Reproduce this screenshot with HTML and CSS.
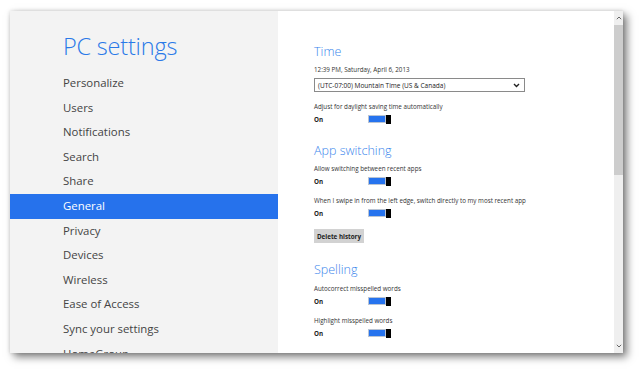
FILE: index.html
```html
<!DOCTYPE html>
<html>
<head>
<meta charset="utf-8">
<link rel="stylesheet" href="styles.css">
</head>
<body>
<div class="window">
  <aside class="sidebar">
    <h1 class="title">PC settings</h1>
    <ul class="nav">
      <li>Personalize</li>
      <li>Users</li>
      <li>Notifications</li>
      <li>Search</li>
      <li>Share</li>
      <li class="active">General</li>
      <li>Privacy</li>
      <li>Devices</li>
      <li>Wireless</li>
      <li>Ease of Access</li>
      <li>Sync your settings</li>
      <li>HomeGroup</li>
    </ul>
  </aside>
  <main class="content">
    <h2 class="heading first">Time</h2>
    <div class="text date">12:39 PM, Saturday, April 6, 2013</div>
    <div class="select">
      <span>(UTC-07:00) Mountain Time (US &amp; Canada)</span>
      <svg class="chev" width="7" height="5" viewBox="0 0 7 5"><polyline points="1,1 3.5,3.5 6,1" fill="none" stroke="#222" stroke-width="1.4"/></svg>
    </div>
    <div class="text desc">Adjust for daylight saving time automatically</div>
    <div class="onrow"><span class="on">On</span><span class="toggle"><span class="track"></span><span class="thumb"></span></span></div>

    <h2 class="heading">App switching</h2>
    <div class="text desc tight">Allow switching between recent apps</div>
    <div class="onrow"><span class="on">On</span><span class="toggle"><span class="track"></span><span class="thumb"></span></span></div>
    <div class="text desc">When I swipe in from the left edge, switch directly to my most recent app</div>
    <div class="onrow"><span class="on">On</span><span class="toggle"><span class="track"></span><span class="thumb"></span></span></div>
    <div class="button">Delete history</div>

    <h2 class="heading">Spelling</h2>
    <div class="text desc tight2">Autocorrect misspelled words</div>
    <div class="onrow"><span class="on">On</span><span class="toggle"><span class="track"></span><span class="thumb"></span></span></div>
    <div class="text desc">Highlight misspelled words</div>
    <div class="onrow"><span class="on">On</span><span class="toggle"><span class="track"></span><span class="thumb"></span></span></div>
  </main>
  <div class="scrollbar">
    <div class="arrow up"><svg width="6" height="4" viewBox="0 0 6 4"><polyline points="0.8,3.2 3,1 5.2,3.2" fill="none" stroke="#666" stroke-width="1"/></svg></div>
    <div class="thumbbar"></div>
    <div class="track-rest"></div>
    <div class="arrow down"><svg width="6" height="4" viewBox="0 0 6 4"><polyline points="0.8,0.8 3,3 5.2,0.8" fill="none" stroke="#666" stroke-width="1"/></svg></div>
  </div>
</div>
</body>
</html>
```

FILE: styles.css
```css
html, body {
  margin: 0;
  padding: 0;
  background: #ffffff;
}
body {
  width: 640px;
  height: 372px;
  overflow: hidden;
  font-family: "Open Sans", "Noto Sans", "Liberation Sans", sans-serif;
}
.window {
  margin: 11px 0 0 10px;
  width: 613px;
  height: 342px;
  display: flex;
  overflow: hidden;
  background: #fff;
  box-shadow: 4px 4px 8px rgba(0,0,0,0.5), 0 0 4px rgba(0,0,0,0.15);
}
.sidebar {
  width: 268px;
  flex: none;
  background: #f3f3f3;
  padding-top: 20px;
  box-sizing: border-box;
  overflow: hidden;
}
.title {
  margin: 0 0 10px 53px;
  font-size: 23.5px;
  line-height: 30px;
  font-weight: 300;
  color: #2a79e8;
  letter-spacing: -0.2px;
}
.nav {
  list-style: none;
  margin: 0;
  padding: 0;
}
.nav li {
  height: 24.6px;
  line-height: 24.6px;
  padding-left: 53px;
  font-size: 11.4px;
  color: #444;
}
.nav li.active {
  background: #2672ec;
  color: #fff;
}
.content {
  width: 336px;
  flex: none;
  box-sizing: border-box;
  padding: 31px 0 0 36px;
  overflow: hidden;
}
.heading {
  margin: 17px 0 0 0;
  padding-top: 1px;
  font-size: 12.5px;
  line-height: 18px;
  font-weight: 300;
  color: #3a86ec;
}
.heading.first {
  margin-top: 0;
}
.text {
  font-size: 6.25px;
  line-height: 10px;
  color: #333;
  white-space: nowrap;
}
.date {
  margin-top: 4px;
}
.select {
  margin-top: 3px;
  width: 211px;
  height: 14px;
  box-sizing: border-box;
  border: 1px solid #8a8a8a;
  display: flex;
  align-items: center;
  justify-content: space-between;
  padding: 0 4px 0 3px;
  font-size: 6.5px;
  color: #222;
}
.chev {
  display: block;
}
.desc {
  margin-top: 10px;
}
.desc.tight {
  margin-top: 4px;
}
.desc.tight2 {
  margin-top: 5px;
}
.onrow {
  margin-top: 2px;
  height: 10px;
  display: flex;
  align-items: center;
}
.on {
  width: 54px;
  font-size: 6.25px;
  font-weight: 700;
  color: #222;
}
.toggle {
  display: flex;
  align-items: center;
}
.track {
  width: 18px;
  height: 8px;
  box-sizing: border-box;
  border: 1px solid #b9c4d4;
  background: #2673ee;
}
.thumb {
  width: 5px;
  height: 9px;
  background: #000;
}
.button {
  margin-top: 11px;
  width: 50px;
  height: 14px;
  background: #d2d2d2;
  font-size: 6.25px;
  font-weight: 700;
  color: #222;
  display: flex;
  align-items: center;
  justify-content: center;
}
.scrollbar {
  width: 9px;
  flex: none;
  display: flex;
  flex-direction: column;
  background: #efefef;
}
.arrow {
  height: 14px;
  flex: none;
  display: flex;
  align-items: center;
  justify-content: center;
}
.arrow svg {
  display: block;
}
.thumbbar {
  height: 150px;
  flex: none;
  background: #cdcdcd;
}
.track-rest {
  flex: 1;
}
```
